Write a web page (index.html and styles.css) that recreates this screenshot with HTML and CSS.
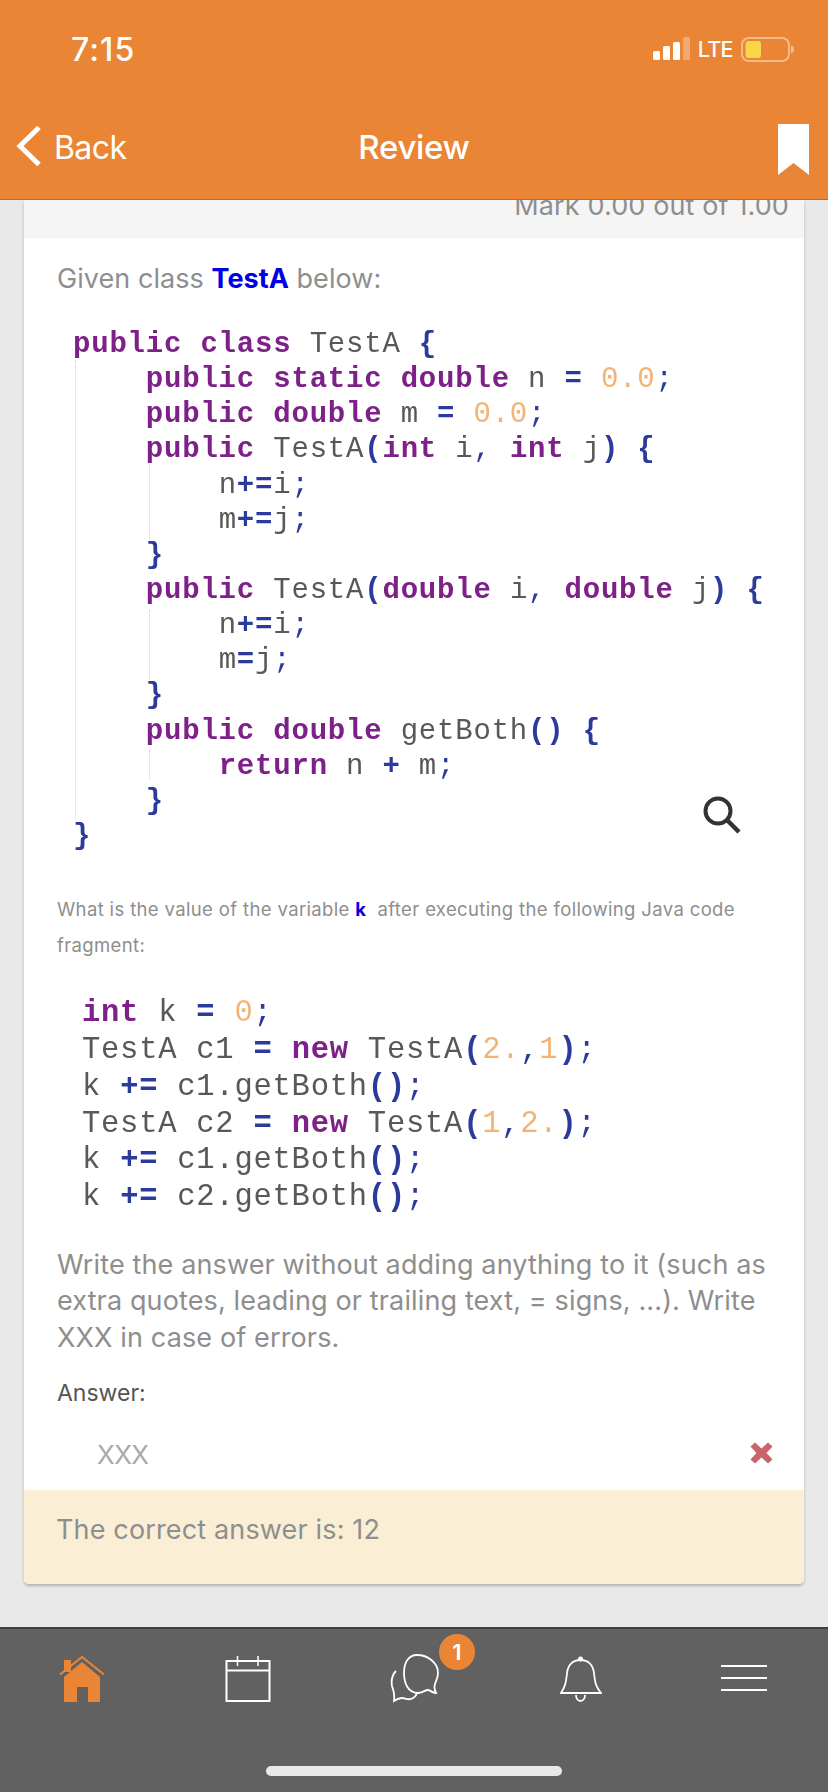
FILE: index.html
```html
<!DOCTYPE html>
<html lang="en">
<head>
<meta charset="utf-8">
<title>Review</title>
<link rel="stylesheet" href="styles.css">
</head>
<body>
<div class="app">
  <header class="header">
    <div class="status">
      <span class="time">7:15</span>
      <div class="status-right">
        <svg class="signal" width="37" height="23" viewBox="0 0 37 23"><rect x="0" y="14" width="7" height="9" rx="1.5" fill="#fff"/><rect x="10" y="9" width="7" height="14" rx="1.5" fill="#fff"/><rect x="20" y="5" width="7" height="18" rx="1.5" fill="#fff"/><rect x="30" y="0" width="7" height="23" rx="1.5" fill="#fff" opacity=".3"/></svg>
        <span class="lte">LTE</span>
        <svg class="battery" width="53" height="25" viewBox="0 0 53 25"><rect x="1" y="1" width="47" height="23" rx="7" fill="none" stroke="#fff" stroke-opacity=".45" stroke-width="2"/><rect x="4.500" y="4" width="15.500" height="17" rx="3" fill="#f8d648"/><path d="M50 8.500c2 .5 3 2 3 4s-1 3.500-3 4z" fill="#fff" fill-opacity=".45"/></svg>
      </div>
    </div>
    <nav class="nav">
      <div class="back">
        <svg class="chevron" width="26" height="42" viewBox="0 0 26 42"><path d="M23 2.500 4 21l19 18.500" fill="none" stroke="#fff" stroke-width="5"/></svg>
        <span class="back-label">Back</span>
      </div>
      <span class="title">Review</span>
      <svg class="bookmark" width="31" height="51" viewBox="0 0 31 51"><path d="M0 0h31v51L15.500 39 0 51z" fill="#fff"/></svg>
    </nav>
  </header>

  <main class="main">
    <section class="card">
      <div class="mark"><span>Mark 0.00 out of 1.00</span></div>
      <div class="question">
        <p class="given">Given class <b class="hl">TestA</b> below:</p>
        <div class="code code-a">
          <i class="guide guide-outer"></i>
          <i class="guide guide-1"></i>
          <i class="guide guide-2"></i>
          <i class="guide guide-3"></i>
          <div><b class="kw">public class</b> <span class="id">TestA</span> <b class="pn">{</b></div>
          <div>    <b class="kw">public static double</b> <span class="id">n</span> <b class="pn">=</b> <span class="num">0.0</span><span class="pn">;</span></div>
          <div>    <b class="kw">public double</b> <span class="id">m</span> <b class="pn">=</b> <span class="num">0.0</span><span class="pn">;</span></div>
          <div>    <b class="kw">public</b> <span class="id">TestA</span><b class="pn">(</b><b class="kw">int</b> <span class="id">i</span><span class="pn">,</span> <b class="kw">int</b> <span class="id">j</span><b class="pn">)</b> <b class="pn">{</b></div>
          <div>        <span class="id">n</span><b class="pn">+=</b><span class="id">i</span><span class="pn">;</span></div>
          <div>        <span class="id">m</span><b class="pn">+=</b><span class="id">j</span><span class="pn">;</span></div>
          <div>    <b class="pn">}</b></div>
          <div>    <b class="kw">public</b> <span class="id">TestA</span><b class="pn">(</b><b class="kw">double</b> <span class="id">i</span><span class="pn">,</span> <b class="kw">double</b> <span class="id">j</span><b class="pn">)</b> <b class="pn">{</b></div>
          <div>        <span class="id">n</span><b class="pn">+=</b><span class="id">i</span><span class="pn">;</span></div>
          <div>        <span class="id">m</span><b class="pn">=</b><span class="id">j</span><span class="pn">;</span></div>
          <div>    <b class="pn">}</b></div>
          <div>    <b class="kw">public double</b> <span class="id">getBoth</span><b class="pn">()</b> <b class="pn">{</b></div>
          <div>        <b class="kw">return</b> <span class="id">n</span> <b class="pn">+</b> <span class="id">m</span><span class="pn">;</span></div>
          <div>    <b class="pn">}</b></div>
          <div><b class="pn">}</b></div>
          <svg class="zoom-icon" width="38" height="38" viewBox="0 0 38 38"><circle cx="15" cy="15" r="12.500" fill="none" stroke="#333" stroke-width="4"/><path d="m24 24 12 12" stroke="#333" stroke-width="4.500"/></svg>
        </div>
        <p class="what">What is the value of the variable <b class="hl">k</b>&nbsp; after executing the following Java code fragment:</p>
        <div class="code code-b">
          <div><b class="kw">int</b> <span class="id">k</span> <b class="pn">=</b> <span class="num">0</span><span class="pn">;</span></div>
          <div><span class="id">TestA c1</span> <b class="pn">=</b> <b class="kw">new</b> <span class="id">TestA</span><b class="pn">(</b><span class="num">2.</span><span class="pn">,</span><span class="num">1</span><b class="pn">)</b><span class="pn">;</span></div>
          <div><span class="id">k</span> <b class="pn">+=</b> <span class="id">c1.getBoth</span><b class="pn">()</b><span class="pn">;</span></div>
          <div><span class="id">TestA c2</span> <b class="pn">=</b> <b class="kw">new</b> <span class="id">TestA</span><b class="pn">(</b><span class="num">1</span><span class="pn">,</span><span class="num">2.</span><b class="pn">)</b><span class="pn">;</span></div>
          <div><span class="id">k</span> <b class="pn">+=</b> <span class="id">c1.getBoth</span><b class="pn">()</b><span class="pn">;</span></div>
          <div><span class="id">k</span> <b class="pn">+=</b> <span class="id">c2.getBoth</span><b class="pn">()</b><span class="pn">;</span></div>
        </div>
        <p class="write">Write the answer without adding anything to it (such as extra quotes, leading or trailing text, = signs, ...). Write XXX in case of errors.</p>
        <p class="answer-label">Answer:</p>
        <div class="answer-row">
          <span class="answer-value">XXX</span>
          <svg class="wrong" width="23" height="22" viewBox="0 0 23 22"><path d="M5 0.500 11.500 6.500 18 0.500 22.500 4.500 16.500 11 22.500 17.500 18 21.500 11.500 15.500 5 21.500 .5 17.500 6.500 11 .5 4.500z" fill="#c9646f"/></svg>
        </div>
      </div>
      <div class="feedback">The correct answer is: 12</div>
    </section>
  </main>

  <footer class="tabbar">
    <div class="tabs">
      <svg class="tab-icon" width="46" height="46" viewBox="0 0 46 46"><path d="M5 4h7v12H5z" fill="#e98534"/><path d="M23 6 41 21v25H29V31H18v15H5V21z" fill="#e98534"/><path d="M1 18.500 23 1l22 17.500" fill="none" stroke="#e98534" stroke-width="2"/></svg>
      <svg class="tab-icon" width="46" height="46" viewBox="0 0 46 46"><rect x="1.500" y="5" width="43" height="40" fill="none" stroke="#fff" stroke-width="2"/><path d="M1.500 14.500h43" stroke="#fff" stroke-width="2"/><path d="M12.500 0v10M33 0v10" stroke="#fff" stroke-width="1.500"/></svg>
      <div class="chat">
        <svg width="50" height="50" viewBox="0 0 50 50"><path d="M27 1c-9 0-13 8-13 18 0 10 4 20 14 20 4 0 7-3 10-3 2 0 4 3 8 3-2-4-2-6-1-9 1-3 3-6 3-11C48 9 38 1 27 1z" fill="none" stroke="#fff" stroke-width="1.800"/><path d="M6 17C2 21 1 26 2 32c1 4 3 6 2 15 3-2 5-3 8-3 3 0 5 2 9 1 3-1 5-3 6-6" fill="none" stroke="#fff" stroke-width="1.800"/></svg>
        <span class="badge">1</span>
      </div>
      <svg class="tab-icon" width="42" height="46" viewBox="0 0 42 46"><circle cx="20.500" cy="3" r="2.500" fill="#fff"/><path d="M1 37c4-6 5-10 6-20 1-8 6-13 13.500-13S33 9 34 17c1 10 2 14 7 20z" fill="none" stroke="#fff" stroke-width="1.800"/><path d="M16 39c0 8 9 8 9 0" fill="none" stroke="#fff" stroke-width="1.800"/></svg>
      <svg class="tab-icon" width="46" height="46" viewBox="0 0 46 46"><path d="M0 10h46M0 22h46M0 34h46" stroke="#fff" stroke-width="2"/></svg>
    </div>
    <div class="home-bar"></div>
  </footer>
</div>
</body>
</html>
```

FILE: styles.css
```css
* { box-sizing: border-box; }
html, body { margin: 0; padding: 0; }
body { font-family: Inter, "Liberation Sans", sans-serif; background: #e9e9e9; }
p { margin: 0; }

.app { width: 828px; height: 1792px; display: flex; flex-direction: column; overflow: hidden; }

.header { height: 200px; flex: none; background: #e98534; border-bottom: 1px solid #b96a28; color: #fff; position: relative; z-index: 2; display: flex; flex-direction: column; }
.status { height: 99px; display: flex; justify-content: space-between; align-items: flex-start; padding: 32px 34px 0 71px; }
.time { font-size: 32px; line-height: 36px; font-weight: 500; letter-spacing: 1.1px; }
.status-right { display: flex; align-items: flex-start; padding-top: 5px; }
.signal { margin-right: 8px; }
.lte { font-size: 21.5px; line-height: 26px; font-weight: 500; letter-spacing: -.6px; margin-right: 8px; margin-top: -1px; }
.nav { flex: 1; display: flex; align-items: flex-start; justify-content: space-between; position: relative; padding: 24px 19px 0 16px; }
.back { display: flex; align-items: flex-start; gap: 12px; font-size: 32px; line-height: 42px; margin-top: 2px; letter-spacing: -.6px; }
.back-label { margin-top: 2px; }
.title { position: absolute; left: 0; right: 0; top: 27px; text-align: center; font-size: 33px; line-height: 42px; font-weight: 500; letter-spacing: -.3px; }
.bookmark { margin-top: 1px; }

.main { flex: 1; min-height: 0; }
.card { margin: 0 24px; background: #fff; border-radius: 0 0 5px 5px; box-shadow: 0 2px 3px rgba(0,0,0,.24); }
.mark { height: 38px; background: #f5f5f5; display: flex; justify-content: flex-end; padding-right: 15px; color: #8e8e8e; font-size: 27px; line-height: 34px; letter-spacing: .12px; }
.mark span { margin-top: -11px; }

.question { padding: 23px 33px 0; color: #8e8e8e; font-size: 27px; }
.given { line-height: 36px; letter-spacing: .05px; }
.hl { color: #0000e6; font-weight: 700; }
.code { font-family: "Liberation Mono", "DejaVu Sans Mono", monospace; position: relative; filter: blur(.5px); }
.code > div { white-space: pre; }
.code b { font-weight: 700; }
.code-a { font-size: 29px; letter-spacing: .8px; line-height: 35.14px; margin: 30px 0 0 16px; }
.code-b { font-size: 30.5px; letter-spacing: .75px; line-height: 36.8px; margin: 32px 0 0 25px; }
.kw { color: #7d2188; }
.id { color: #585858; }
.pn { color: #2c3a9b; }
.num { color: #f3b375; }

.guide { position: absolute; width: 1px; border-left: 1px dotted #cfcfcf; }
.guide-outer { left: 2px; top: 33px; height: 460px; }
.guide-1 { left: 76px; top: 138px; height: 75px; }
.guide-2 { left: 76px; top: 283px; height: 70px; }
.guide-3 { left: 76px; top: 423px; height: 30px; }
.zoom-icon { position: absolute; left: 630px; top: 469px; }

.what { font-size: 18.5px; line-height: 36px; margin-top: 37px; letter-spacing: .36px; color: #8e8e8e; }
.write { font-size: 27px; line-height: 36.5px; margin-top: 31px; letter-spacing: .13px; }
.answer-label { font-size: 23px; line-height: 36px; margin-top: 18.5px; color: #555; }
.answer-row { height: 79px; display: flex; justify-content: space-between; align-items: center; padding: 9px 0 0 40px; margin-right: -1px; }
.answer-value { color: #aaa; font-size: 26px; line-height: 34px; letter-spacing: -.6px; }
.wrong { margin: -4px -1px 0 0; }

.feedback { height: 94px; background: #faefd5; border-radius: 0 0 5px 5px; display: flex; align-items: center; padding: 0 32px 14px; color: #8e8e8e; font-size: 27px; letter-spacing: .15px; }

.tabbar { height: 165px; flex: none; background: #616161; border-top: 2px solid #3f3f3f; display: flex; flex-direction: column; }
.tabs { display: flex; justify-content: space-between; align-items: flex-start; padding: 27px 61px 0 59px; height: 137px; }
.tab-icon { display: block; }
.chat { position: relative; width: 50px; height: 50px; margin-top: -2px; }
.chat svg { display: block; }
.badge { position: absolute; left: 49px; top: -20px; width: 36px; height: 36px; border-radius: 50%; background: #e98534; color: #fff; font-size: 22px; font-weight: 600; line-height: 36px; text-align: center; }
.home-bar { width: 296px; height: 10px; border-radius: 5px; background: #e9e9e9; margin: 0 auto; }
```
